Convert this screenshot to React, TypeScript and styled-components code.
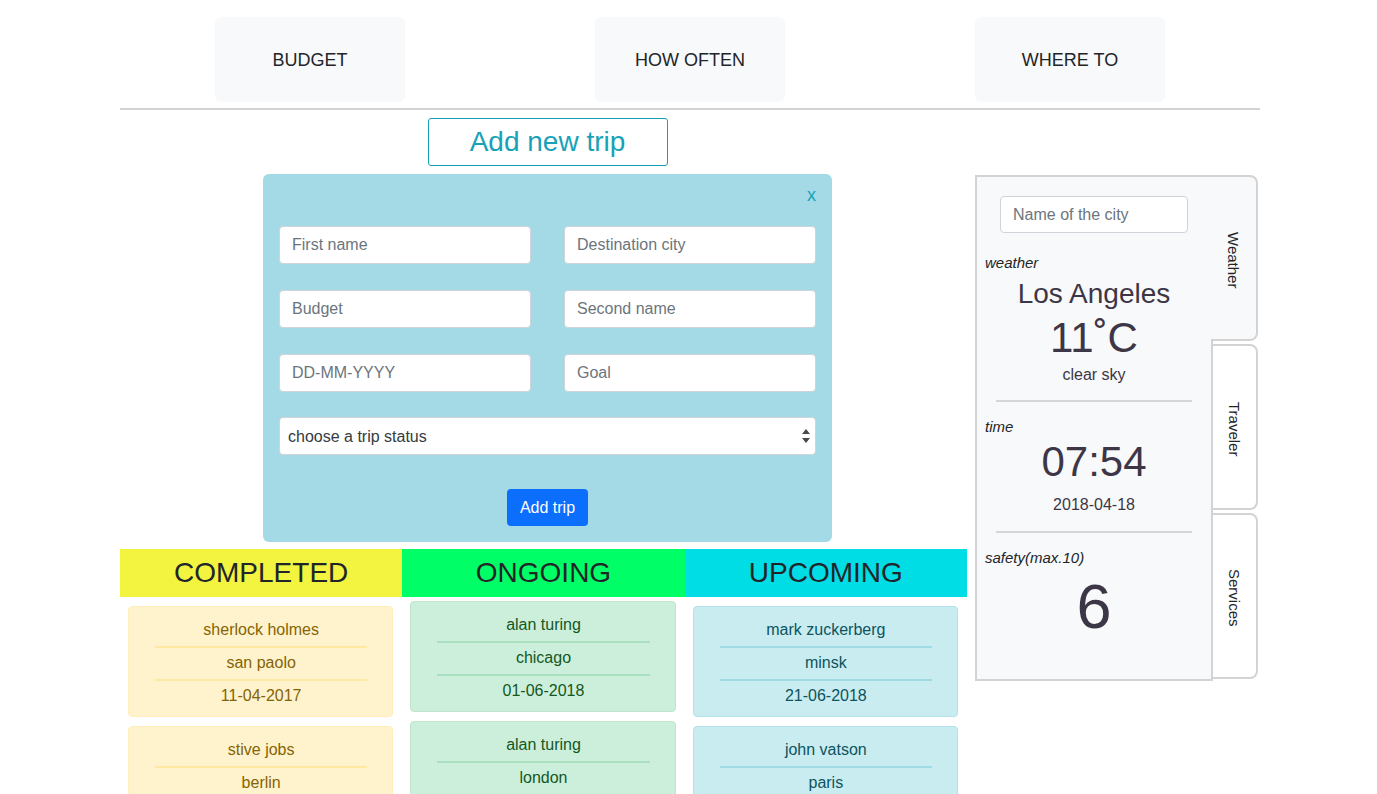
import React from 'react'
import styled, { createGlobalStyle } from 'styled-components'

const GlobalStyle = createGlobalStyle`
    * { box-sizing: border-box; }
    body {
        margin: 0;
        font-family: "Liberation Sans", Arial, sans-serif;
        color: #212529;
        background: #ffffff;
    }
`

const Page = styled.div`
    width: 1140px;
    margin-left: 120px;
`

const Nav = styled.nav`
    display: grid;
    grid-template-columns: repeat(3, 1fr);
    padding: 17px 0 6px;
    border-bottom: 2px solid #d3d3d3;
`

const NavCell = styled.div`
    display: flex;
    justify-content: center;
`

const NavBox = styled.div`
    width: 190px;
    height: 85px;
    padding-top: 2px;
    display: flex;
    align-items: center;
    justify-content: center;
    background: #f8f9fa;
    border-radius: 6px;
    font-size: 18px;
    color: #212529;
`

const Main = styled.div`
    display: flex;
`

const LeftCol = styled.div`
    width: 855px;
    display: flex;
    flex-direction: column;
    align-items: center;
`

const OutlineButton = styled.button`
    margin-top: 8px;
    width: 240px;
    height: 48px;
    background: #ffffff;
    border: 1px solid #17a2b8;
    border-radius: 3px;
    color: #17a2b8;
    font-family: inherit;
    font-size: 28px;
    padding: 0;
`

const FormPanel = styled.div`
    position: relative;
    margin-top: 8px;
    width: 569px;
    background: #a4dae6;
    border-radius: 6px;
    padding: 52px 16px 16px;
    display: flex;
    flex-direction: column;
    align-items: center;
`

const Close = styled.span`
    position: absolute;
    top: 11px;
    right: 16px;
    font-size: 18px;
    color: #17a2b8;
`

const FieldGrid = styled.div`
    width: 100%;
    display: grid;
    grid-template-columns: 1fr 1fr;
    column-gap: 33px;
    row-gap: 26px;
`

const Input = styled.input`
    width: 100%;
    height: 38px;
    border: 1px solid #ced4da;
    border-radius: 4px;
    padding: 0 12px;
    font-family: inherit;
    font-size: 16px;
    color: #495057;
    background: #ffffff;
    &::placeholder { color: #6c757d; }
`

const SelectWrap = styled.div`
    position: relative;
    width: 100%;
    margin-top: 25px;
`

const Select = styled.select`
    width: 100%;
    height: 38px;
    appearance: none;
    border: 1px solid #ced4da;
    border-radius: 4px;
    padding: 0 8px;
    font-family: inherit;
    font-size: 16px;
    color: #343a40;
    background: #ffffff;
`

const Arrows = styled.svg`
    position: absolute;
    right: 6px;
    top: 12px;
    pointer-events: none;
`

const PrimaryButton = styled.button`
    margin-top: 34px;
    width: 81px;
    height: 37px;
    border: none;
    border-radius: 4px;
    background: #0b6efd;
    color: #ffffff;
    font-family: inherit;
    font-size: 16px;
    padding: 0;
`

const Statuses = styled.div`
    width: 847px;
    align-self: flex-start;
    margin-top: 7px;
    display: grid;
    grid-template-columns: repeat(3, 1fr);
`

const StatusCol = styled.div`
    display: flex;
    flex-direction: column;
`

const StatusHead = styled.div<{ $bg: string }>`
    height: 48px;
    display: flex;
    align-items: center;
    justify-content: center;
    background: ${({ $bg }) => $bg};
    font-size: 28px;
    color: #212529;
`

const CardList = styled.div<{ $lift?: boolean }>`
    display: flex;
    flex-direction: column;
    gap: 9px;
    padding: ${({ $lift }) => ($lift ? '4px' : '9px')} 9px 0 8px;
`

type Tone = { bg: string; border: string; line: string; text: string }

const tones: Record<string, Tone> = {
    completed: { bg: '#fff3cd', border: '#ffeeba', line: '#ffe8a1', text: '#856404' },
    ongoing: { bg: '#ccefdb', border: '#bfe6cc', line: '#a8e0c0', text: '#155724' },
    upcoming: { bg: '#c9ecf0', border: '#b2e2e9', line: '#a0dae4', text: '#0c5460' },
}

const Card = styled.div<{ $tone: Tone }>`
    background: ${({ $tone }) => $tone.bg};
    border: 1px solid ${({ $tone }) => $tone.border};
    color: ${({ $tone }) => $tone.text};
    border-radius: 4px;
    padding: 11px 25px 8px 26px;
    text-align: center;
    font-size: 16px;
`

const CardLine = styled.div`
    line-height: 24px;
`

const CardRule = styled.hr<{ $color: string }>`
    margin: 4px 0 3px;
    border: 0;
    border-top: 2px solid ${({ $color }) => $color};
`

const Side = styled.aside`
    margin-top: 65px;
    display: flex;
    align-items: flex-start;
`

const InfoBox = styled.div`
    width: 238px;
    height: 506px;
    background: #f8f9fa;
    border: 2px solid #d3d3d3;
    padding: 19px 8px;
    display: flex;
    flex-direction: column;
    color: #3d3646;
`

const CityInput = styled(Input)`
    align-self: center;
    width: 188px;
    height: 37px;
`

const Label = styled.div<{ $mt: number }>`
    margin-top: ${({ $mt }) => $mt}px;
    font-size: 15px;
    font-style: italic;
    line-height: 20px;
    color: #212529;
`

const Value = styled.div<{ $size: number; $lh: number; $mt: number }>`
    margin-top: ${({ $mt }) => $mt}px;
    font-size: ${({ $size }) => $size}px;
    line-height: ${({ $lh }) => $lh}px;
    text-align: center;
`

const Rule = styled.hr<{ $mt: number }>`
    margin: ${({ $mt }) => $mt}px 11px 0;
    border: 0;
    border-top: 2px solid #d6d6d6;
`

const Tabs = styled.div`
    display: flex;
    flex-direction: column;
    gap: 3px;
`

const Tab = styled.div<{ $active?: boolean; $h: number }>`
    width: ${({ $active }) => ($active ? '47px' : '45px')};
    height: ${({ $h }) => $h}px;
    margin-left: ${({ $active }) => ($active ? '-2px' : '0')};
    padding-top: 4px;
    background: ${({ $active }) => ($active ? '#f8f9fa' : '#ffffff')};
    border: 2px solid #d3d3d3;
    border-left: none;
    border-radius: 0 8px 8px 0;
    display: flex;
    align-items: center;
    justify-content: center;
    writing-mode: vertical-rl;
    font-size: 15px;
    color: #212529;
`

const data = {
    completed: [
        ['sherlock holmes', 'san paolo', '11-04-2017'],
        ['stive jobs', 'berlin', '02-03-2017'],
    ],
    ongoing: [
        ['alan turing', 'chicago', '01-06-2018'],
        ['alan turing', 'london', '05-06-2018'],
    ],
    upcoming: [
        ['mark zuckerberg', 'minsk', '21-06-2018'],
        ['john vatson', 'paris', '30-06-2018'],
    ],
}

const columns = [
    { key: 'completed', title: 'COMPLETED', bg: '#f2f43f' },
    { key: 'ongoing', title: 'ONGOING', bg: '#00ff66' },
    { key: 'upcoming', title: 'UPCOMING', bg: '#00dde4' },
] as const

const App: React.FunctionComponent = () => {
    return (
        <>
            <GlobalStyle />
            <Page>
                <Nav>
                    {['BUDGET', 'HOW OFTEN', 'WHERE TO'].map((item) => (
                        <NavCell key={item}>
                            <NavBox>{item}</NavBox>
                        </NavCell>
                    ))}
                </Nav>

                <Main>
                    <LeftCol>
                        <OutlineButton>Add new trip</OutlineButton>
                        <FormPanel>
                            <Close>x</Close>
                            <FieldGrid>
                                <Input placeholder="First name" />
                                <Input placeholder="Destination city" />
                                <Input placeholder="Budget" />
                                <Input placeholder="Second name" />
                                <Input placeholder="DD-MM-YYYY" />
                                <Input placeholder="Goal" />
                            </FieldGrid>
                            <SelectWrap>
                                <Select defaultValue="">
                                    <option value="">choose a trip status</option>
                                    <option>completed</option>
                                    <option>ongoing</option>
                                    <option>upcoming</option>
                                </Select>
                                <Arrows width="8" height="14" viewBox="0 0 8 14">
                                    <path d="M4 0 L8 5 H0 Z M4 14 L8 9 H0 Z" fill="#4a4a4a" />
                                </Arrows>
                            </SelectWrap>
                            <PrimaryButton>Add trip</PrimaryButton>
                        </FormPanel>

                        <Statuses>
                            {columns.map((col) => {
                                const tone = tones[col.key]
                                return (
                                    <StatusCol key={col.key}>
                                        <StatusHead $bg={col.bg}>{col.title}</StatusHead>
                                        <CardList $lift={col.key === 'ongoing'}>
                                            {data[col.key].map((trip, index) => (
                                                <Card key={index} $tone={tone}>
                                                    <CardLine>{trip[0]}</CardLine>
                                                    <CardRule $color={tone.line} />
                                                    <CardLine>{trip[1]}</CardLine>
                                                    <CardRule $color={tone.line} />
                                                    <CardLine>{trip[2]}</CardLine>
                                                </Card>
                                            ))}
                                        </CardList>
                                    </StatusCol>
                                )
                            })}
                        </Statuses>
                    </LeftCol>

                    <Side>
                        <InfoBox>
                            <CityInput placeholder="Name of the city" />
                            <Label $mt={20}>weather</Label>
                            <Value $size={28} $lh={32} $mt={5}>Los Angeles</Value>
                            <Value $size={42} $lh={48} $mt={4}>11˚C</Value>
                            <Value $size={16} $lh={22} $mt={2}>clear sky</Value>
                            <Rule $mt={14} />
                            <Label $mt={15}>time</Label>
                            <Value $size={42} $lh={48} $mt={1}>07:54</Value>
                            <Value $size={16} $lh={22} $mt={8}>2018-04-18</Value>
                            <Rule $mt={15} />
                            <Label $mt={15}>safety(max.10)</Label>
                            <Value $size={63} $lh={70} $mt={3}>6</Value>
                        </InfoBox>
                        <Tabs>
                            <Tab $active $h={166}>Weather</Tab>
                            <Tab $h={166}>Traveler</Tab>
                            <Tab $h={166}>Services</Tab>
                        </Tabs>
                    </Side>
                </Main>
            </Page>
        </>
    )
}

export default App
